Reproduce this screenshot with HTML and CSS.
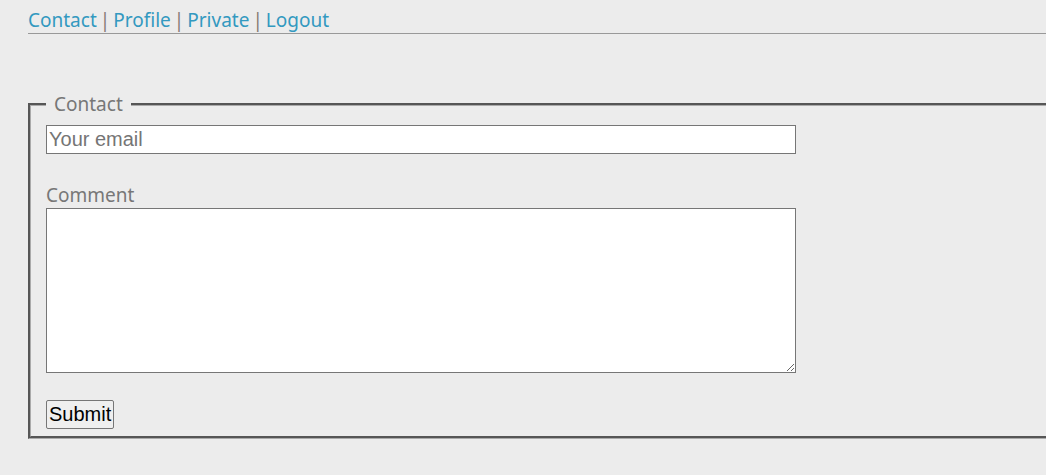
FILE: index.html
```html
<!DOCTYPE html>
<html>
<head>
<meta charset="utf-8">
<link rel="stylesheet" href="styles.css">
</head>
<body>
<div class="page">
  <nav class="nav">
    <a href="#">Contact</a><span class="sep">|</span><a href="#">Profile</a><span class="sep">|</span><a href="#">Private</a><span class="sep">|</span><a href="#">Logout</a>
  </nav>
  <fieldset class="box">
    <legend class="legend">Contact</legend>
    <input class="email" type="text" placeholder="Your email">
    <label class="label">Comment</label>
    <textarea class="comment"></textarea>
    <button class="submit" type="button">Submit</button>
  </fieldset>
</div>
</body>
</html>
```
FILE: styles.css
```css
html, body {
  margin: 0;
  background: #ececec;
  overflow: hidden;
}
.page {
  padding-left: 28px;
  width: 1100px;
  font-family: "Noto Sans", sans-serif;
}
.nav {
  font-size: 19px;
  line-height: 24px;
  padding-top: 8px;
  border-bottom: 1px solid #999;
  height: 25px;
}
.nav a {
  color: #3399c0;
  text-decoration: none;
}
.sep {
  color: #857a74;
  margin: 0 3px;
}
.box {
  margin: 57px 0 0 0;
  padding: 0 15px 7px 15px;
  border: 3px groove #aaa;
  display: flex;
  flex-direction: column;
  align-items: flex-start;
}
.legend {
  color: #777;
  font-size: 19px;
  padding: 0 8px;
  margin-left: 0;
}
.email {
  width: 750px;
  height: 29px;
  box-sizing: border-box;
  font-family: "Liberation Sans", Arial, sans-serif;
  font-size: 20px;
  padding: 0 2px;
  border: 1px solid #767676;
  margin-top: 8px;
}
.email::placeholder { color: #757575; }
.label {
  color: #777;
  font-size: 19px;
  margin-top: 28px;
  line-height: 26px;
}
.comment {
  width: 750px;
  height: 165px;
  box-sizing: border-box;
  border: 1px solid #767676;
  margin: 0;
}
.submit {
  margin-top: 27px;
  font-family: "Liberation Sans", Arial, sans-serif;
  font-size: 20px;
  padding: 2px 2px;
  border: 1px solid #767676;
  border-radius: 2px;
  background: #efefef;
  color: #000;
}
```
